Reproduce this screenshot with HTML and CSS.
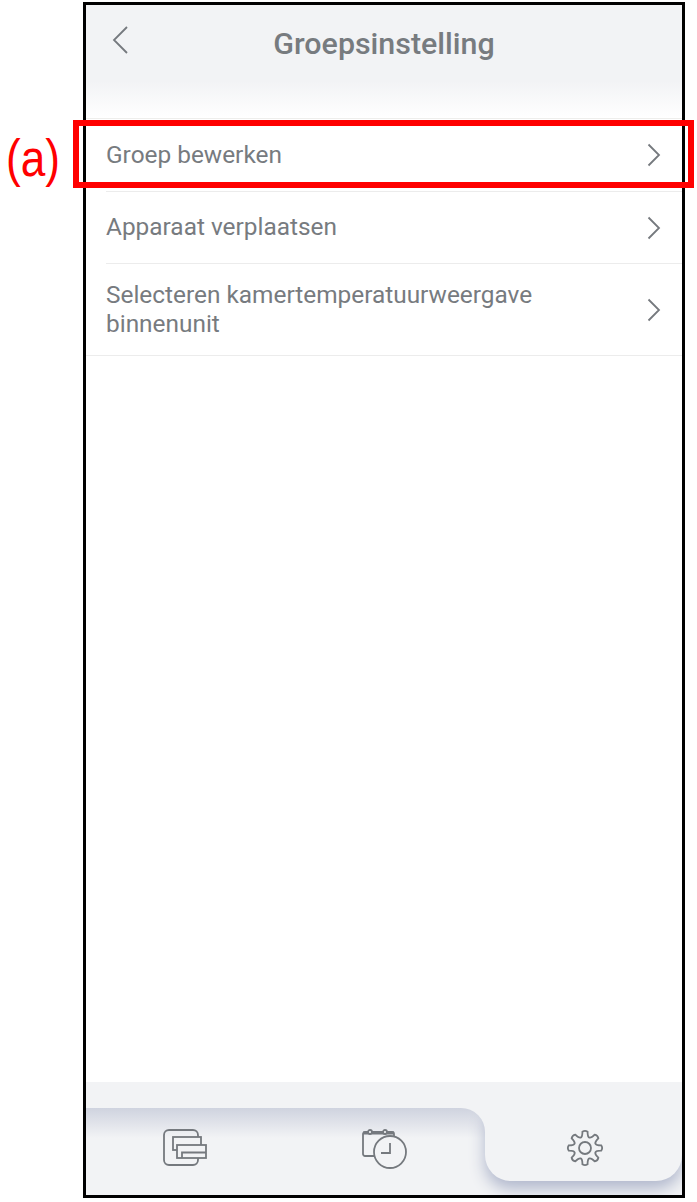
FILE: index.html
```html
<!DOCTYPE html>
<html lang="en">
<head>
    <meta charset="UTF-8">
    <meta name="viewport" content="width=device-width, initial-scale=1.0">
    <title>Groepsinstelling</title>
    <link rel="stylesheet" href="styles.css">
</head>
<body>
    <div class="phone">
        <div class="header">
            <svg class="back" width="16" height="28" viewBox="0 0 16 28"><path d="M15 1 2 14l13 13"/></svg>
            <h1>Groepsinstelling</h1>
        </div>
        <div class="list">
            <div class="row first">
                <span class="label">Groep bewerken</span>
                <svg class="arrow" width="14" height="24" viewBox="0 0 14 24"><path d="M1.500 1.500 12 12 1.500 22.500"/></svg>
            </div>
            <div class="row">
                <span class="label">Apparaat verplaatsen</span>
                <svg class="arrow" width="14" height="24" viewBox="0 0 14 24"><path d="M1.500 1.500 12 12 1.500 22.500"/></svg>
            </div>
            <div class="row tall">
                <span class="label">Selecteren kamertemperatuurweergave<br>binnenunit</span>
                <svg class="arrow" width="14" height="24" viewBox="0 0 14 24"><path d="M1.500 1.500 12 12 1.500 22.500"/></svg>
            </div>
        </div>
        <div class="tabbar">
            <div class="tabs-off">
                <div class="tab">
                    <svg class="icon" width="46" height="38" viewBox="0 0 46 38">
                        <rect x="1" y="1" width="34" height="35" rx="5"/>
                        <rect x="10" y="8" width="28" height="13" class="fill"/>
                        <rect x="14" y="16" width="29" height="13" class="fill"/>
                        <path d="M19 29v-5.500h24"/>
                    </svg>
                </div>
                <div class="tab">
                    <svg class="icon" width="46" height="42" viewBox="0 0 46 42">
                        <path d="M17 27H3a2 2 0 0 1-2-2V5a2 2 0 0 1 2-2h27a2 2 0 0 1 2 2v5"/>
                        <path class="band" d="M1 4h31"/>
                        <circle class="fill" cx="8" cy="3" r="2"/>
                        <circle class="fill" cx="23" cy="3" r="2"/>
                        <circle class="fill" cx="28" cy="23" r="16"/>
                        <path d="M28 14v10H19"/>
                    </svg>
                </div>
            </div>
            <div class="tab-on">
                <div class="tab-on-inner">
                    <svg class="icon" width="38" height="38" viewBox="-19 -19 38 38">
                        <path d="M16.300-2.580Q18 0 16.300 2.580Q6 2.500 13.350 9.700Q12.730 12.730 9.700 13.350Q2.500 6 2.580 16.300Q0 18-2.580 16.300Q-2.500 6-9.700 13.350Q-12.730 12.730-13.350 9.700Q-6 2.500-16.300 2.580Q-18 0-16.300-2.580Q-6-2.500-13.350-9.700Q-12.730-12.730-9.700-13.350Q-2.500-6-2.580-16.300Q0-18 2.580-16.300Q2.500-6 9.700-13.350Q12.730-12.730 13.350-9.700Q6-2.500 16.300-2.580Z"/>
                        <circle cx="0" cy="0" r="6"/>
                    </svg>
                </div>
            </div>
        </div>
    </div>

    <div class="mark"></div>
    <div class="mark-label">(a)</div>
</body>
</html>
```

FILE: styles.css
```css
* {
    margin: 0;
    padding: 0;
    box-sizing: border-box;
}
body {
    position: relative;
    width: 697px;
    height: 1202px;
    overflow: hidden;
    padding: 2px 0 0 83px;
    background-color: white;
    font-family: Roboto, "Liberation Sans", sans-serif;
    color: #777b7f;
}
.phone {
    width: 602px;
    height: 1196px;
    border: 3px solid black;
    display: flex;
    flex-direction: column;
}
.header {
    height: 114px;
    flex: none;
    display: flex;
    justify-content: center;
    padding-top: 21px;
    position: relative;
    border-bottom: 1px solid #eeeeec;
    background: linear-gradient(#f2f3f5 0, #f2f3f5 76px, white 113px);
}
.header h1 {
    font-size: 30.400px;
    font-weight: 500;
    line-height: 36px;
}
.back {
    position: absolute;
    left: 26px;
    top: 21px;
}
svg path, svg rect, svg circle {
    fill: none;
    stroke: #75797e;
    stroke-width: 1.800;
}
.list {
    flex: 1;
}
.row {
    display: flex;
    justify-content: space-between;
    align-items: center;
    min-height: 72px;
    margin-left: 20px;
    padding-right: 21px;
    border-bottom: 1px solid #ececec;
    font-size: 24.400px;
    line-height: 29px;
}
.row.first {
    min-height: 73px;
}
.row.tall {
    min-height: 92px;
    margin-left: 0;
    padding-left: 20px;
}
.label {
    padding-bottom: 2px;
}
.tabbar {
    height: 113px;
    flex: none;
    display: flex;
    align-items: flex-end;
    background-color: #f2f3f5;
}
.tabs-off {
    flex: 1;
    height: 87px;
    display: flex;
    position: relative;
    overflow: hidden;
    border-top-right-radius: 24px;
    background: linear-gradient(#cfd3df, #f2f3f5 30px);
}
/* shadow of the active tab falling on the other two */
.tabs-off::after {
    content: "";
    position: absolute;
    top: 0;
    right: -197px;
    width: 197px;
    height: 73px;
    border-radius: 0 0 26px 26px;
    box-shadow: 0 8px 16px #b0b7cc;
}
.tab {
    flex: 1;
    display: flex;
    justify-content: center;
    padding-top: 21px;
}
.tab-on {
    width: 197px;
    height: 87px;
    overflow: hidden;
    background-color: #f2f3f5;
}
.tab-on-inner {
    height: 73px;
    display: flex;
    justify-content: center;
    padding: 21px 0 0 2px;
    border-radius: 0 0 26px 26px;
    background-color: #f2f3f5;
    box-shadow: 0 8px 16px #b0b7cc;
}
.icon rect.fill, .icon circle.fill {
    fill: #f2f3f5;
}
.icon .band {
    stroke-width: 3;
}
.mark {
    position: absolute;
    left: 73px;
    top: 120px;
    width: 621px;
    height: 68px;
    border: 6px solid #ff0000;
}
.mark-label {
    position: absolute;
    left: 6px;
    top: 128px;
    font-family: "Liberation Sans", sans-serif;
    font-size: 52px;
    line-height: 60px;
    color: #ff0000;
    transform: scaleX(0.85);
    transform-origin: left;
}
```
